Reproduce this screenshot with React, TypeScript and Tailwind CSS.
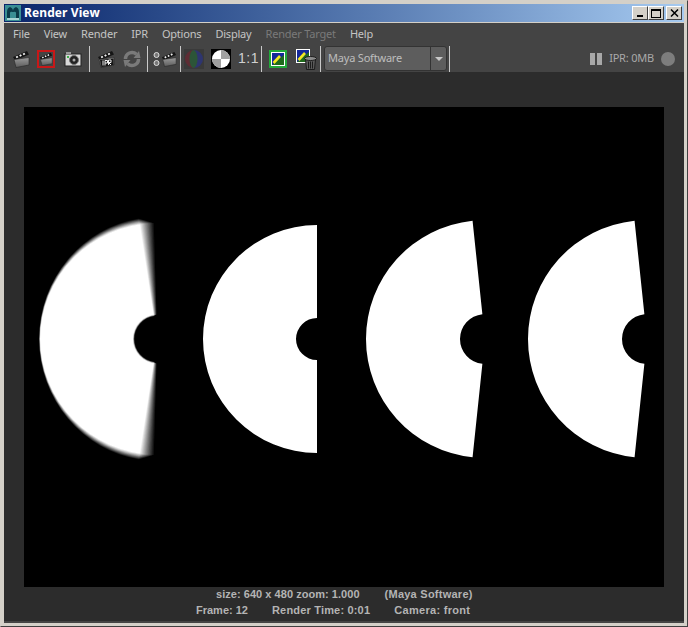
const menus = ["File", "View", "Render", "IPR", "Options", "Display", "Render Target", "Help"];

// half disc with a notch, corners given by the angle away from straight up/down
function sector(cx: number, cy: number, R: number, r: number, deg: number, ry = R) {
  const a = (deg * Math.PI) / 180;
  const tx = cx - R * Math.sin(a);
  const ty = ry * Math.cos(a);
  const hx = cx - r * Math.sin(a);
  const hy = r * Math.cos(a);
  return `M${tx} ${cy - ty}A${R} ${ry} 0 0 0 ${tx} ${cy + ty}L${hx} ${cy + hy}A${r} ${r} 0 0 1 ${hx} ${cy - hy}Z`;
}

function Clapper({ size = 18, label }: { size?: number; label?: boolean }) {
  return (
    <svg width={size} height={size} viewBox="0 0 18 18" className="shrink-0">
      <defs>
        <linearGradient id="clap" x1="0" y1="0" x2="0" y2="1">
          <stop offset="0" stopColor="#9a9a9a" />
          <stop offset="1" stopColor="#5c5c5c" />
        </linearGradient>
      </defs>
      <path d="M1 7 15 1l2 3.500L3 10.500Z" fill="#151515" />
      <path d="M4.500 6.200l1 1.600M8 4.700l1 1.600M11.500 3.200l1 1.600" stroke="#f0f0f0" strokeWidth="2" />
      <path d="M2 9.500 17 7.500v7.500L4 17.500Z" fill="url(#clap)" stroke="#262626" strokeWidth="0.6" />
      {label && (
        <g>
          <path d="M3 10 16.500 8.500v6.500L4.500 17Z" fill="#151515" />
          <path d="M6 10.500v5M8 10.500v5M8 10.500h2.500v2.500H8M11.500 15v-5h2.500v2.500h-2.500l2.500 2.500" stroke="#f0f0f0" strokeWidth="1" fill="none" />
        </g>
      )}
    </svg>
  );
}

function Sep({ className = "" }: { className?: string }) {
  return <div className={`h-[26px] w-px shrink-0 bg-[#c9c9c9] ${className}`} />;
}

function WinButton({ children, className = "" }: { children: React.ReactNode; className?: string }) {
  return (
    <div
      className={`flex h-[14px] w-[16px] items-center justify-center border border-t-white border-l-white border-r-[#404040] border-b-[#404040] bg-[#d4d0c8] ${className}`}
    >
      {children}
    </div>
  );
}

function ImageThumb() {
  return (
    <svg width="12" height="12" viewBox="0 0 12 12" className="block">
      <rect width="12" height="12" fill="#14289a" />
      <path d="M0 12 12 2v10Z" fill="#1f6a1c" />
      <path d="M1.500 10 8 3" stroke="#f2e820" strokeWidth="2.600" />
    </svg>
  );
}

export default function App() {
  const blur = Array.from({ length: 24 }, (_, i) => i / 23);
  return (
    <div className="h-[627px] w-[688px] overflow-hidden border-b border-r border-b-[#404040] border-r-[#404040] border-t border-l border-t-[#d4d0c8] border-l-[#d4d0c8] bg-[#d4d0c8] [font-family:'Noto_Sans',sans-serif]">
      <div className="flex h-full flex-col px-[3px] pb-[3px] pt-[3px]">
        <div className="flex h-[18px] shrink-0 items-center bg-gradient-to-r from-[#0a246a] to-[#a6caf0] pl-[1px] pr-[2px]">
          <svg width="16" height="16" viewBox="0 0 16 16" className="shrink-0">
            <rect width="16" height="16" fill="#3a8f94" />
            <path d="M2 14V7q0-4 3-5 3 1 3 4 0-3 3-4 3 1 3 5v7h-3V8q0-2-3-1-3-1-3 1v6Z" fill="#0b3a48" />
            <rect x="2" y="13" width="12" height="2" fill="#a8d4d4" />
          </svg>
          <span className="ml-[3px] text-[12px] font-bold tracking-[0.1px] text-white">Render View</span>
          <div className="ml-auto flex items-center">
            <WinButton>
              <div className="mt-[6px] h-[2px] w-[6px] bg-black" />
            </WinButton>
            <WinButton>
              <div className="h-[9px] w-[10px] border border-t-2 border-black" />
            </WinButton>
            <WinButton className="ml-[2px]">
              <svg width="9" height="8" viewBox="0 0 9 8">
                <path d="M1 0.500 8 7.500M8 0.500 1 7.500" stroke="#000" strokeWidth="1.500" />
              </svg>
            </WinButton>
          </div>
        </div>
        <div className="mt-px flex min-h-0 flex-1 flex-col bg-[#444444]">
          <div className="flex h-[22px] shrink-0 items-center gap-[14px] pl-[9px] text-[11px] tracking-[-0.2px] text-[#c4c4c4]">
            {menus.map((m) => (
              <span key={m} className={m === "Render Target" ? "text-[#7a7a7a]" : ""}>
                {m}
              </span>
            ))}
          </div>
          <div className="flex h-[27px] shrink-0 items-center pl-[8px]">
            <Clapper />
            <div className="ml-[7px] flex h-[18px] w-[18px] items-center justify-center border-2 border-[#c81818]">
              <Clapper size={14} />
            </div>
            <svg width="18" height="16" viewBox="0 0 18 16" className="ml-[9px] shrink-0">
              <rect x="1" y="3" width="16" height="12" fill="#d8d8d8" stroke="#222" />
              <rect x="2" y="1" width="5" height="2" fill="#999" />
              <circle cx="10" cy="9" r="4.500" fill="#222" stroke="#777" />
              <circle cx="10" cy="9" r="1.500" fill="#aaa" />
              <rect x="3" y="5" width="2" height="2" fill="#3fae4a" />
            </svg>
            <Sep className="ml-[7px]" />
            <div className="ml-[7px]">
              <Clapper label />
            </div>
            <svg width="18" height="18" viewBox="0 0 18 18" className="ml-[8px] shrink-0" fill="none">
              <path d="M2.500 9a6.500 6.500 0 0 1 11-4.700" stroke="#7a7a7a" strokeWidth="3.500" />
              <path d="M15.500 9a6.500 6.500 0 0 1-11 4.700" stroke="#7a7a7a" strokeWidth="3.500" />
              <path d="M10.500 8 17.500 8 16 1ZM7.500 10 .500 10 2 17Z" fill="#7a7a7a" />
            </svg>
            <Sep className="ml-[6px]" />
            <svg width="7" height="16" viewBox="0 0 7 16" className="ml-[5px] shrink-0">
              <circle cx="3.500" cy="4" r="2.500" fill="#777" stroke="#ddd" />
              <circle cx="3.500" cy="12" r="2.500" fill="#777" stroke="#ddd" />
            </svg>
            <div className="ml-[1px]">
              <Clapper size={16} />
            </div>
            <Sep className="ml-[3px]" />
            <div className="ml-[3px] flex h-[20px] w-[20px] shrink-0 items-center justify-center bg-[#3a3a3a]">
              <svg width="18" height="18" viewBox="0 0 18 18">
                <path d="M9 0a9 9 0 0 0-9 9 9 9 0 0 0 9 9Z" fill="#5e2c34" />
                <path d="M9 0a9 9 0 0 1 9 9 9 9 0 0 1-9 9Z" fill="#2e3570" />
                <ellipse cx="8.500" cy="9" rx="4" ry="9" fill="#2c5538" />
              </svg>
            </div>
            <div className="ml-[7px] flex h-[20px] w-[20px] shrink-0 items-center justify-center bg-black">
              <svg width="18" height="18" viewBox="0 0 18 18">
                <circle cx="9" cy="9" r="9" fill="#fff" />
                <path d="M9 0a9 9 0 0 1 9 9H9ZM9 18a9 9 0 0 1-9-9h9Z" fill="#a0a0a0" />
              </svg>
            </div>
            <span className="ml-[7px] w-[20px] shrink-0 text-[14px] tracking-[0.5px] text-[#d0d0d0] [font-family:'Liberation_Sans',sans-serif]">1:1</span>
            <Sep className="ml-[3px]" />
            <div className="ml-[7px] flex h-[18px] w-[18px] shrink-0 items-center justify-center border-2 border-[#22a83a]">
              <div className="border border-white">
                <ImageThumb />
              </div>
            </div>
            <div className="relative ml-[9px] h-[20px] w-[20px] shrink-0">
              <div className="w-fit border border-white">
                <ImageThumb />
              </div>
              <svg width="13" height="14" viewBox="0 0 13 14" className="absolute -bottom-[1px] -right-[1px]">
                <path d="M1.500 3h10l-1 10.500h-8Z" fill="#5a5a5a" stroke="#1c1c1c" />
                <ellipse cx="6.500" cy="2.500" rx="6" ry="2" fill="#8c8c8c" stroke="#1c1c1c" />
                <path d="M4.500 5.500v7M6.500 5.500v7M8.500 5.500v7" stroke="#1c1c1c" />
              </svg>
            </div>
            <Sep className="ml-[4px]" />
            <div className="ml-[3px] flex h-[25px] w-[123px] shrink-0 items-center rounded-[3px] border border-[#333] bg-[#5d5d5d] text-[11px] tracking-[-0.2px] text-[#bdbdbd]">
              <span className="flex-1 pl-[3px]">Maya Software</span>
              <div className="flex h-full w-[16px] items-center justify-center border-l border-[#333]">
                <div className="h-0 w-0 border-x-[4px] border-t-[4px] border-x-transparent border-t-[#c8c8c8]" />
              </div>
            </div>
            <Sep className="ml-[2px]" />
            <div className="ml-auto flex items-center pr-[9px]">
              <div className="h-[12px] w-[5px] bg-[#a8a8a8]" />
              <div className="ml-[2px] h-[12px] w-[5px] bg-[#a8a8a8]" />
              <span className="ml-[7px] text-[11px] tracking-[-0.2px] text-[#a9a9a9]">IPR: 0MB</span>
              <div className="ml-[7px] h-[14px] w-[14px] rounded-full bg-[#7d7d7d]" />
            </div>
          </div>
          <div className="flex min-h-0 flex-1 flex-col items-center border-b-2 border-[#444444] bg-[#2c2c2c] pt-[35px]">
            <svg width="640" height="480" viewBox="0 0 640 480" className="shrink-0 bg-black">
              {blur.map((t, i) => (
                <g key={i} opacity={1 / (i + 1)}>
                  <rect x="0" y="90" width="150" height="300" fill="#000" />
                  <path d={sector(133.500, 232, 117.500 + t, 24.500 - t * 1.500, 1.500 + t * 7.500, 116 + t * 6)} fill="#fff" />
                </g>
              ))}
              <path d={sector(293, 232, 114, 21, 0)} fill="#fff" />
              <path d={sector(461, 232, 119, 25, 6)} fill="#fff" />
              <path d={sector(623, 232, 119, 25, 6)} fill="#fff" />
            </svg>
            <div className="-mt-px w-full text-[11px] font-bold leading-[16px] text-[#b4b4b4] [font-family:'Liberation_Sans',sans-serif]">
              <div className="flex gap-[25px] pl-[212px]">
                <span className="tracking-[0.04px]">size: 640 x 480 zoom: 1.000</span>
                <span className="tracking-[0.25px]">(Maya Software)</span>
              </div>
              <div className="flex gap-[24px] pl-[192px]">
                <span>Frame: 12</span>
                <span className="tracking-[0.18px]">Render Time: 0:01</span>
                <span className="tracking-[0.3px]">Camera: front</span>
              </div>
            </div>
          </div>
        </div>
      </div>
    </div>
  );
}
